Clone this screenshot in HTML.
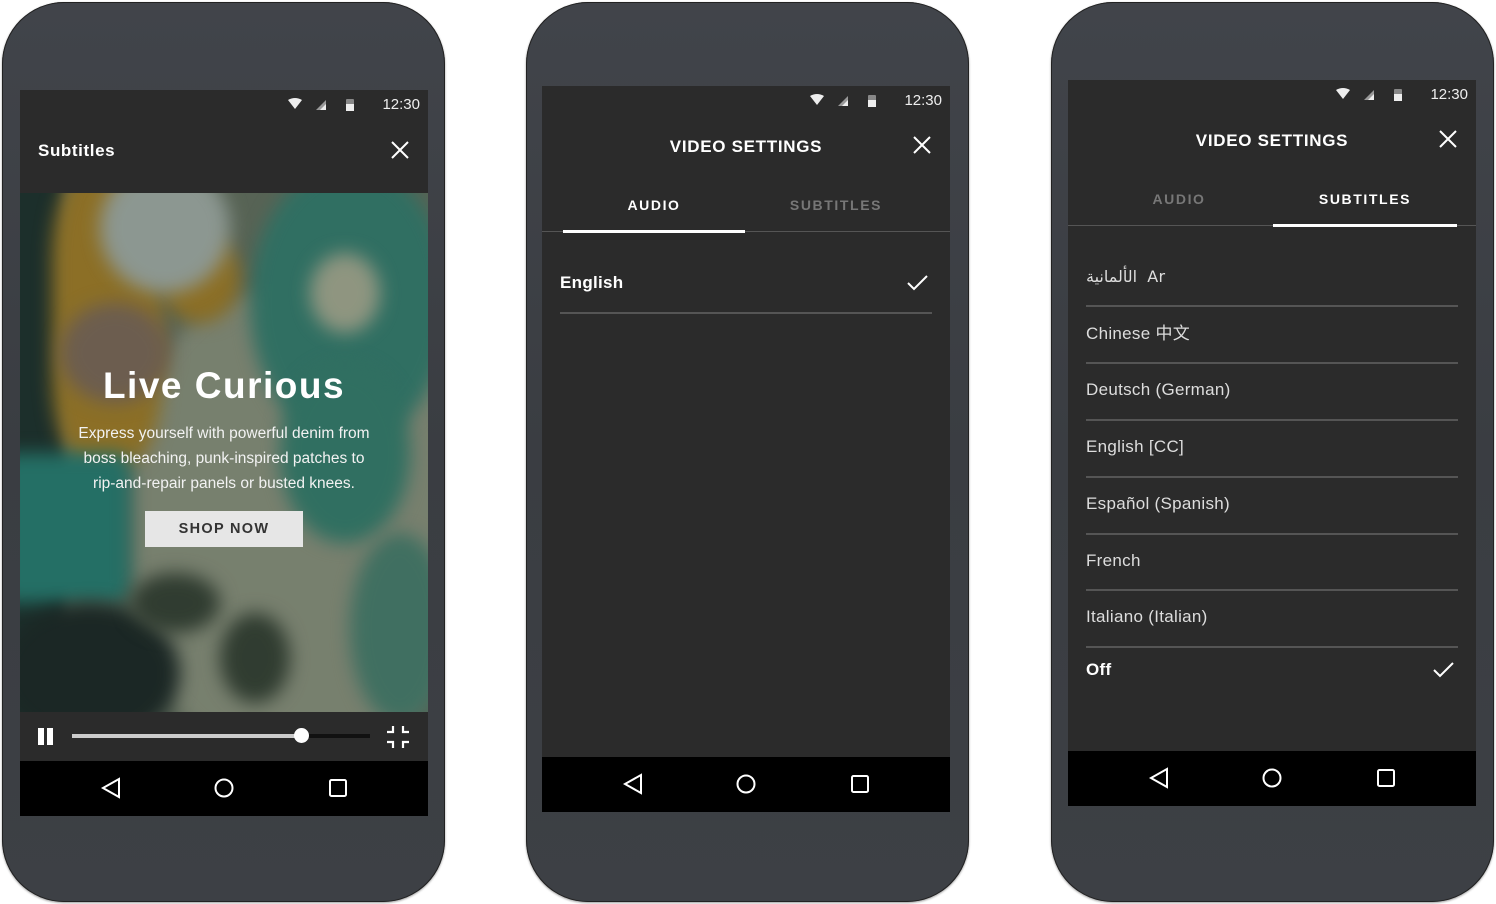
<!DOCTYPE html>
<html><head><meta charset="utf-8"><style>
*{margin:0;padding:0;box-sizing:border-box}
body{width:1496px;height:904px;background:#fff;position:relative;overflow:hidden;font-family:"Liberation Sans","Noto Sans CJK SC",sans-serif;color:#fff}
.phone{position:absolute;top:2px;width:443px;height:900px;border-radius:62px;background:linear-gradient(180deg,#41444a 0%,#3a3d42 50%,#3d4045 100%);box-shadow:0 0 0 1px #222 inset,0 1px 2px rgba(0,0,0,.4)}
.scr{position:absolute;width:408px;background:#2b2b2b;overflow:hidden}
.abs{position:absolute}
.status{position:absolute;right:8px;top:6px;font-size:15px;color:#eee;display:flex;align-items:center;gap:0}
.nav{position:absolute;left:0;width:408px;height:55px;background:#000}
.title{position:absolute;font-weight:bold;letter-spacing:.7px;font-size:17px}
.tab{position:absolute;font-weight:bold;font-size:14px;letter-spacing:1.6px}
.row{position:absolute;left:18px;font-size:17px;line-height:20px;color:#ddd;letter-spacing:.3px}
.div{position:absolute;left:18px;width:372px;height:2px;background:#555}
.b{position:absolute;border-radius:50%;filter:blur(9px)}
</style></head><body>

<div class="phone" style="left:2px"></div>
<div class="phone" style="left:526px"></div>
<div class="phone" style="left:1051px"></div>

<!-- Phone 1 -->
<div class="scr" style="left:20px;top:90px;height:726px">
  <div class="status"><svg width="90" height="16" viewBox="0 0 90 16"><path d="M2 3 Q9 -1 16 3 L9 12Z" fill="#eee"/><path d="M30 13 L40 3 L40 13Z" fill="#999"/><path d="M34 13 L40 7 L40 13Z" fill="#eee"/><rect x="60" y="2" width="8" height="12" rx="1" fill="#888"/><rect x="60" y="7" width="8" height="7" fill="#eee"/></svg><span style="margin-left:6px">12:30</span></div>
  <div class="abs" style="left:18px;top:51px;font-size:17px;font-weight:bold;letter-spacing:.6px">Subtitles</div>
  <svg class="abs" style="left:370px;top:50px" width="20" height="20"><path d="M2 2L18 18M18 2L2 18" stroke="#fff" stroke-width="2"/></svg>
  <div class="abs" style="left:0;top:103px;width:408px;height:519px;overflow:hidden;background:#6e7a68">
    <div class="b" style="left:-30px;top:-20px;width:75px;height:560px;background:#1f3430;border-radius:0;filter:blur(6px)"></div>
    <div class="b" style="left:110px;top:100px;width:330px;height:460px;background:#99a08a;border-radius:40%"></div>
    <div class="b" style="left:230px;top:-30px;width:200px;height:280px;background:#3a8a7a"></div>
    <div class="b" style="left:290px;top:60px;width:70px;height:80px;background:#b8bda2"></div>
    <div class="b" style="left:32px;top:-20px;width:110px;height:290px;background:#b48a2a;border-radius:30%"></div>
    <div class="b" style="left:140px;top:40px;width:80px;height:90px;background:#b48a2a"></div>
    <div class="b" style="left:80px;top:-30px;width:130px;height:130px;background:#b4bfb8"></div>
    <div class="b" style="left:40px;top:110px;width:110px;height:100px;background:#8a7260"></div>
    <div class="b" style="left:-20px;top:260px;width:130px;height:150px;background:#2a8a7e;border-radius:10%"></div>
    <div class="b" style="left:-20px;top:410px;width:180px;height:140px;background:#1e2a28"></div>
    <div class="b" style="left:260px;top:170px;width:130px;height:180px;background:#3a8a78"></div>
    <div class="b" style="left:110px;top:380px;width:90px;height:60px;background:#3a4638"></div>
    <div class="b" style="left:200px;top:420px;width:70px;height:90px;background:#3a4638"></div>
    <div class="b" style="left:330px;top:340px;width:100px;height:190px;background:#4f8a78"></div>
    <div class="abs" style="left:0;top:0;width:408px;height:519px;background:rgba(20,30,28,.25)"></div>
    <div class="abs" style="left:0;top:172px;width:408px;text-align:center;font-size:37px;font-weight:bold;letter-spacing:1.5px">Live Curious</div>
    <div class="abs" style="left:0;top:228px;width:408px;text-align:center;font-size:15.5px;line-height:25px;color:#f2f2f2">Express yourself with powerful denim from<br>boss bleaching, punk-inspired patches to<br>rip-and-repair panels or busted knees.</div>
    <div class="abs" style="left:125px;top:318px;width:158px;height:36px;background:#e6e6e6;color:#333;font-size:14.5px;font-weight:bold;letter-spacing:1.3px;text-align:center;line-height:36px">SHOP NOW</div>
  </div>
  <div class="abs" style="left:0;top:622px;width:408px;height:49px;background:#2b2b2b">
    <div class="abs" style="left:18px;top:16px;width:6px;height:17px;background:#fff"></div>
    <div class="abs" style="left:27px;top:16px;width:6px;height:17px;background:#fff"></div>
    <div class="abs" style="left:52px;top:22px;width:298px;height:4px;background:#111"></div>
    <div class="abs" style="left:52px;top:22px;width:230px;height:4px;background:#ccc"></div>
    <div class="abs" style="left:274px;top:16px;width:15px;height:15px;border-radius:50%;background:#fff"></div>
    <svg class="abs" style="left:366px;top:13px" width="24" height="24"><path d="M7 1V7H1M17 1V7H23M1 17H7V23M23 17H17V23" stroke="#fff" stroke-width="2.2" fill="none"/></svg>
  </div>
  <div class="nav" style="top:671px"><svg width="408" height="55"><path d="M99 18L83 27L99 36Z" stroke="#fff" stroke-width="2" fill="none"/><circle cx="204" cy="27" r="8.5" stroke="#fff" stroke-width="2" fill="none"/><rect x="310" y="19" width="16" height="16" rx="1.5" stroke="#fff" stroke-width="2" fill="none"/></svg></div>
</div>

<!-- Phone 2 -->
<div class="scr" style="left:542px;top:86px;height:726px">
  <div class="status"><svg width="90" height="16" viewBox="0 0 90 16"><path d="M2 3 Q9 -1 16 3 L9 12Z" fill="#eee"/><path d="M30 13 L40 3 L40 13Z" fill="#999"/><path d="M34 13 L40 7 L40 13Z" fill="#eee"/><rect x="60" y="2" width="8" height="12" rx="1" fill="#888"/><rect x="60" y="7" width="8" height="7" fill="#eee"/></svg><span style="margin-left:6px">12:30</span></div>
  <div class="title" style="left:0;width:408px;text-align:center;top:51px">VIDEO SETTINGS</div>
  <svg class="abs" style="left:370px;top:49px" width="20" height="20"><path d="M2 2L18 18M18 2L2 18" stroke="#fff" stroke-width="2"/></svg>
  <div class="tab" style="left:21px;width:182px;text-align:center;top:111px">AUDIO</div>
  <div class="tab" style="left:203px;width:182px;text-align:center;top:111px;color:#777">SUBTITLES</div>
  <div class="abs" style="left:0;top:145px;width:408px;height:1px;background:#555"></div>
  <div class="abs" style="left:21px;top:144px;width:182px;height:3px;background:#fff"></div>
  <div class="row" style="top:187px;font-weight:bold;color:#fff">English</div>
  <svg class="abs" style="left:364px;top:187px" width="24" height="20"><path d="M2 10L8 16L21 3" stroke="#fff" stroke-width="2" fill="none"/></svg>
  <div class="div" style="top:226px"></div>
  <div class="nav" style="top:671px"><svg width="408" height="55"><path d="M99 18L83 27L99 36Z" stroke="#fff" stroke-width="2" fill="none"/><circle cx="204" cy="27" r="8.5" stroke="#fff" stroke-width="2" fill="none"/><rect x="310" y="19" width="16" height="16" rx="1.5" stroke="#fff" stroke-width="2" fill="none"/></svg></div>
</div>

<!-- Phone 3 -->
<div class="scr" style="left:1068px;top:80px;height:726px">
  <div class="status"><svg width="90" height="16" viewBox="0 0 90 16"><path d="M2 3 Q9 -1 16 3 L9 12Z" fill="#eee"/><path d="M30 13 L40 3 L40 13Z" fill="#999"/><path d="M34 13 L40 7 L40 13Z" fill="#eee"/><rect x="60" y="2" width="8" height="12" rx="1" fill="#888"/><rect x="60" y="7" width="8" height="7" fill="#eee"/></svg><span style="margin-left:6px">12:30</span></div>
  <div class="title" style="left:0;width:408px;text-align:center;top:51px">VIDEO SETTINGS</div>
  <svg class="abs" style="left:370px;top:49px" width="20" height="20"><path d="M2 2L18 18M18 2L2 18" stroke="#fff" stroke-width="2"/></svg>
  <div class="tab" style="left:20px;width:182px;text-align:center;top:111px;color:#777">AUDIO</div>
  <div class="tab" style="left:205px;width:184px;text-align:center;top:111px">SUBTITLES</div>
  <div class="abs" style="left:0;top:145px;width:408px;height:1px;background:#555"></div>
  <div class="abs" style="left:205px;top:144px;width:184px;height:3px;background:#fff"></div>
  <div class="row" style="top:187px;font-family:'DejaVu Sans','Liberation Sans',sans-serif;font-size:16px">الألمانية&nbsp; Ar</div>
  <div class="div" style="top:225px"></div>
  <div class="row" style="top:244px">Chinese 中文</div>
  <div class="div" style="top:282px"></div>
  <div class="row" style="top:300px">Deutsch (German)</div>
  <div class="div" style="top:339px"></div>
  <div class="row" style="top:357px">English [CC]</div>
  <div class="div" style="top:396px"></div>
  <div class="row" style="top:414px">Español (Spanish)</div>
  <div class="div" style="top:453px"></div>
  <div class="row" style="top:471px">French</div>
  <div class="div" style="top:509px"></div>
  <div class="row" style="top:527px">Italiano (Italian)</div>
  <div class="div" style="top:566px"></div>
  <div class="row" style="top:580px;font-weight:bold;color:#fff">Off</div>
  <svg class="abs" style="left:364px;top:580px" width="24" height="20"><path d="M2 10L8 16L21 3" stroke="#fff" stroke-width="2" fill="none"/></svg>
  <div class="nav" style="top:671px"><svg width="408" height="55"><path d="M99 18L83 27L99 36Z" stroke="#fff" stroke-width="2" fill="none"/><circle cx="204" cy="27" r="8.5" stroke="#fff" stroke-width="2" fill="none"/><rect x="310" y="19" width="16" height="16" rx="1.5" stroke="#fff" stroke-width="2" fill="none"/></svg></div>
</div>
</body></html>
